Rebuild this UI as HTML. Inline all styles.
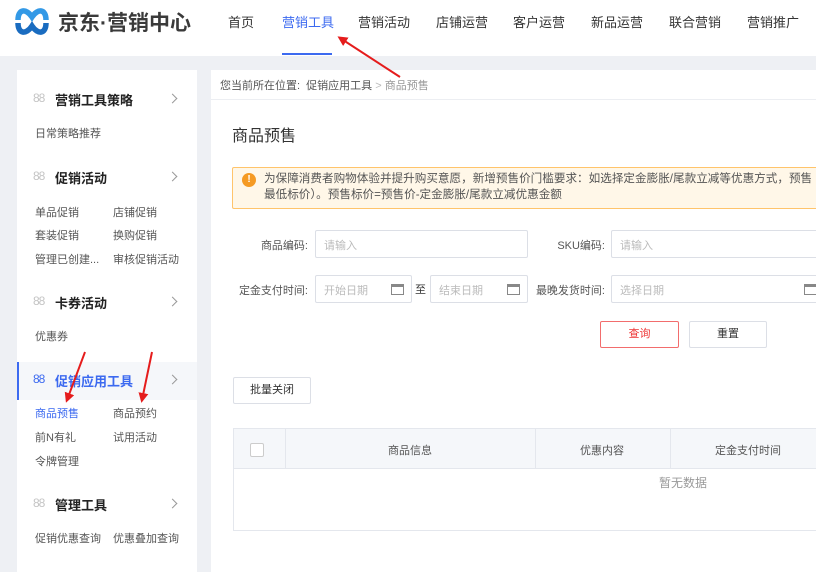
<!DOCTYPE html>
<html><head><meta charset="utf-8"><style>
*{margin:0;padding:0;box-sizing:border-box}
body{width:816px;height:572px;overflow:hidden;background:#eef0f4;font-family:"Liberation Sans","Noto Sans CJK SC",sans-serif;color:#333;position:relative;font-size:12px}
.a{position:absolute;white-space:nowrap}
.hdr{position:absolute;left:0;top:0;width:816px;height:56px;background:#fff}
.nav{font-size:13px;color:#333;top:12px}
.side{position:absolute;left:17px;top:70px;width:180px;height:502px;background:#fff}
.main{position:absolute;left:211px;top:70px;width:605px;height:502px;background:#fff}
.sh{font-size:13px;font-weight:bold;color:#222}
.ic{color:#c4c4c4;font-size:12px;letter-spacing:-1px}
.chev{position:absolute;width:7px;height:7px;border-right:1.3px solid #999;border-top:1.3px solid #999;transform:rotate(45deg)}
.si{font-size:11px;color:#555}
.inp{position:absolute;height:28px;border:1px solid #dcdfe6;border-radius:2px;background:#fff;font-size:11px;color:#bbb;padding:6px 0 0 8px}
.lbl{font-size:11px;color:#555;text-align:right}
.btn{position:absolute;height:27px;border:1px solid #dcdfe6;border-radius:2px;font-size:11px;text-align:center;line-height:25px;color:#333;background:#fff}
.cal{position:absolute;width:13px;height:11px;border:1.5px solid #888;border-top-width:3px;top:8px}
</style></head><body>
<div class="hdr"></div>
<svg class="a" style="left:15px;top:6px" width="34" height="30" viewBox="0 0 34 30"><path d="M3 14 C3 3 11 2 17 11 C23 2 31 3 31 14" fill="none" stroke="#3399e6" stroke-width="5.5"/><path d="M3 17 C3 28 11 29 17 20 C23 29 31 28 31 17" fill="none" stroke="#1a6cc0" stroke-width="5.5"/></svg>
<div class="a" style="left:58px;top:7px;font-size:21px;font-weight:bold;color:#3a3a3a">京东·营销中心</div>
<div class="a nav" style="left:228px">首页</div>
<div class="a nav" style="left:282px;color:#3c6af0">营销工具</div>
<div class="a" style="left:282px;top:53px;width:50px;height:2px;background:#3c6af0"></div>
<div class="a nav" style="left:358px">营销活动</div>
<div class="a nav" style="left:436px">店铺运营</div>
<div class="a nav" style="left:513px">客户运营</div>
<div class="a nav" style="left:591px">新品运营</div>
<div class="a nav" style="left:669px">联合营销</div>
<div class="a nav" style="left:747px">营销推广</div>

<div class="side"></div>
<div class="a" style="left:17px;top:362px;width:180px;height:38px;background:#f5f7fa;border-left:2px solid #3c6af0"></div>
<div class="a ic" style="left:33px;top:91px">88</div><div class="a sh" style="left:55px;top:90px">营销工具策略</div><div class="chev" style="left:169px;top:95px"></div>
<div class="a si" style="left:35px;top:125px">日常策略推荐</div>
<div class="a ic" style="left:33px;top:169px">88</div><div class="a sh" style="left:55px;top:168px">促销活动</div><div class="chev" style="left:169px;top:173px"></div>
<div class="a si" style="left:35px;top:204px">单品促销</div><div class="a si" style="left:113px;top:204px">店铺促销</div>
<div class="a si" style="left:35px;top:227px">套装促销</div><div class="a si" style="left:113px;top:227px">换购促销</div>
<div class="a si" style="left:35px;top:251px">管理已创建...</div><div class="a si" style="left:113px;top:251px">审核促销活动</div>
<div class="a ic" style="left:33px;top:294px">88</div><div class="a sh" style="left:55px;top:293px">卡券活动</div><div class="chev" style="left:169px;top:298px"></div>
<div class="a si" style="left:35px;top:328px">优惠券</div>
<div class="a ic" style="left:33px;top:372px;color:#3c6af0">88</div><div class="a sh" style="left:55px;top:371px;color:#3c6af0">促销应用工具</div><div class="chev" style="left:169px;top:376px"></div>
<div class="a si" style="left:35px;top:405px;color:#3c6af0">商品预售</div><div class="a si" style="left:113px;top:405px">商品预约</div>
<div class="a si" style="left:35px;top:429px">前N有礼</div><div class="a si" style="left:113px;top:429px">试用活动</div>
<div class="a si" style="left:35px;top:453px">令牌管理</div>
<div class="a ic" style="left:33px;top:496px">88</div><div class="a sh" style="left:55px;top:495px">管理工具</div><div class="chev" style="left:169px;top:500px"></div>
<div class="a si" style="left:35px;top:530px">促销优惠查询</div><div class="a si" style="left:113px;top:530px">优惠叠加查询</div>

<div class="main"></div>
<div class="a" style="left:211px;top:99px;width:605px;height:1px;background:#eceef2"></div>
<div class="a" style="left:220px;top:77px;font-size:11px;color:#555">您当前所在位置: &nbsp;促销应用工具 <span style="color:#bbb">&gt;</span> <span style="color:#999">商品预售</span></div>
<div class="a" style="left:232px;top:122px;font-size:16px;color:#333">商品预售</div>
<div class="a" style="left:232px;top:167px;width:590px;height:42px;background:#fff7e8;border:1px solid #ffc46b;border-radius:2px"></div>
<div class="a" style="left:242px;top:173px;width:14px;height:14px;border-radius:50%;background:#f59a23;color:#fff;font-size:10px;font-weight:bold;text-align:center;line-height:14px">!</div>
<div class="a" style="left:264px;top:171px;font-size:11.6px;color:#555;line-height:16px">为保障消费者购物体验并提升购买意愿，新增预售价门槛要求：如选择定金膨胀/尾款立减等优惠方式，预售<br>最低标价）。预售标价=预售价-定金膨胀/尾款立减优惠金额</div>

<div class="a lbl" style="left:250px;top:237px;width:58px">商品编码:</div>
<div class="inp" style="left:315px;top:230px;width:213px">请输入</div>
<div class="a lbl" style="left:540px;top:237px;width:65px">SKU编码:</div>
<div class="inp" style="left:611px;top:230px;width:210px">请输入</div>
<div class="a lbl" style="left:230px;top:282px;width:78px">定金支付时间:</div>
<div class="inp" style="left:315px;top:275px;width:97px">开始日期<div class="cal" style="left:75px"></div></div>
<div class="a" style="left:415px;top:281px;font-size:11px">至</div>
<div class="inp" style="left:430px;top:275px;width:98px">结束日期<div class="cal" style="left:76px"></div></div>
<div class="a lbl" style="left:530px;top:282px;width:75px">最晚发货时间:</div>
<div class="inp" style="left:611px;top:275px;width:210px">选择日期<div class="cal" style="left:192px"></div></div>
<div class="btn" style="left:600px;top:321px;width:79px;border-color:#f26d6d;color:#e33">查询</div>
<div class="btn" style="left:689px;top:321px;width:78px">重置</div>
<div class="btn" style="left:233px;top:377px;width:78px">批量关闭</div>

<div class="a" style="left:233px;top:428px;width:590px;height:103px;border:1px solid #e4e7ed"></div>
<div class="a" style="left:234px;top:429px;width:590px;height:40px;background:#f5f7fa;border-bottom:1px solid #e4e7ed"></div>
<div class="a" style="left:285px;top:429px;width:1px;height:40px;background:#e4e7ed"></div>
<div class="a" style="left:535px;top:429px;width:1px;height:40px;background:#e4e7ed"></div>
<div class="a" style="left:670px;top:429px;width:1px;height:40px;background:#e4e7ed"></div>
<div class="a" style="left:250px;top:443px;width:14px;height:14px;border:1px solid #ccc;border-radius:2px;background:#fff"></div>
<div class="a" style="left:388px;top:442px;font-size:11px;color:#555">商品信息</div>
<div class="a" style="left:580px;top:442px;font-size:11px;color:#555">优惠内容</div>
<div class="a" style="left:715px;top:442px;font-size:11px;color:#555">定金支付时间</div>
<div class="a" style="left:659px;top:474px;font-size:12px;color:#999">暂无数据</div>

<svg class="a" style="left:0;top:0" width="816" height="572">
<defs><marker id="m" markerWidth="10" markerHeight="10" refX="7" refY="5" orient="auto" markerUnits="userSpaceOnUse"><path d="M0 0L10 5L0 10z" fill="#e51c1c"/></marker></defs>
<g stroke="#e51c1c" stroke-width="2" fill="none">
<line x1="400" y1="77" x2="340" y2="38" marker-end="url(#m)"/>
<line x1="85" y1="352" x2="67" y2="400" marker-end="url(#m)"/>
<line x1="152" y1="352" x2="142" y2="400" marker-end="url(#m)"/>
</g></svg>
</body></html>
